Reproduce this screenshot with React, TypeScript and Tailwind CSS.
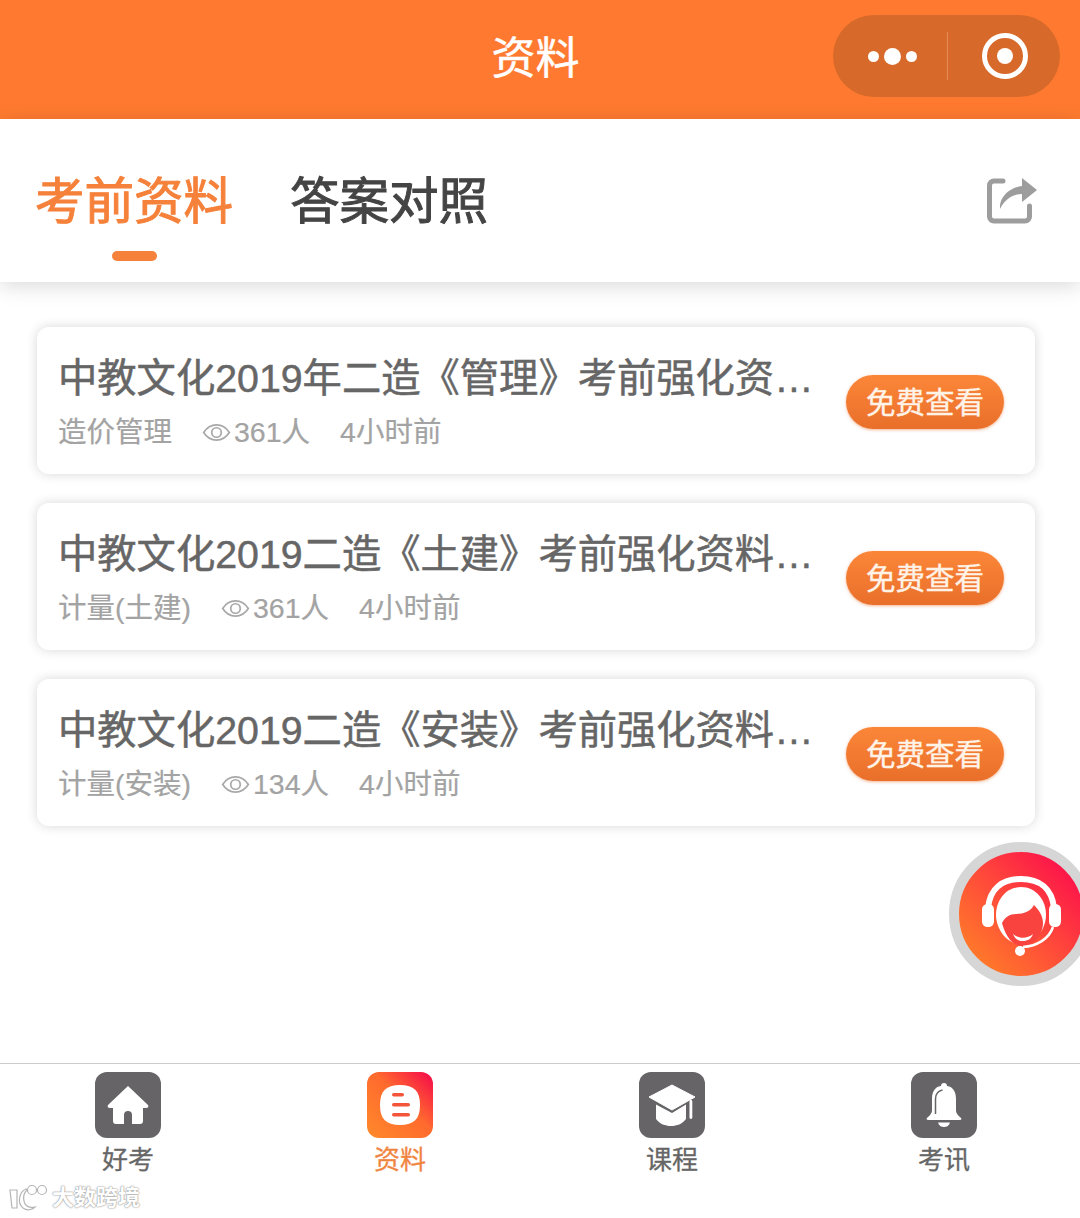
const font = '"Liberation Sans", "Noto Sans CJK SC", sans-serif';

const items = [
  { title: '中教文化2019年二造《管理》考前强化资料汇总', tag: '造价管理', views: '361人' },
  { title: '中教文化2019二造《土建》考前强化资料汇总', tag: '计量(土建)', views: '361人' },
  { title: '中教文化2019二造《安装》考前强化资料汇总', tag: '计量(安装)', views: '134人' },
];

function ShareIcon() {
  return (
    <svg viewBox="0 0 50 46" className="w-[50px] h-[46px]">
      <path d="M16 3H7a4.500 4.500 0 0 0-4.500 4.500v31A4.500 4.500 0 0 0 7 43h31a4.500 4.500 0 0 0 4.500-4.500V28" fill="none" stroke="#9d9d9d" strokeWidth="5" strokeLinecap="round" />
      <path d="M13 31C12 20 21 10 35 8V0l15 12-15 12v-8C26 16 18 21 13 31z" fill="#9d9d9d" />
    </svg>
  );
}

function EyeIcon() {
  return (
    <svg viewBox="0 0 30 20" className="w-[29px] h-[19px]" fill="none" stroke="#a8a8a8" strokeWidth="1.800">
      <path d="M1.500 10C5 4.500 9.500 2 15 2s10 2.500 13.500 8C25 15.500 20.500 18 15 18S5 15.500 1.500 10z" />
      <circle cx="15" cy="10" r="5" />
    </svg>
  );
}

function HomeIcon() {
  return (
    <svg viewBox="0 0 42 38" className="w-[42px] h-[38px]">
      <path d="M21 0 41 19c1 2 0 3-2 3h-3v13a3 3 0 0 1-3 3h-8V29a4 4 0 0 0-8 0v9H9a3 3 0 0 1-3-3V22H3c-2 0-3-1-2-3z" fill="#fff" />
    </svg>
  );
}

function DocIcon() {
  return (
    <svg viewBox="0 0 40 40" className="w-[40px] h-[40px]">
      <path d="M20 0c14 0 20 6 20 20s-6 20-20 20S0 34 0 20 6 0 20 0z" fill="#fff" />
      <rect x="12" y="8" width="12" height="3.500" rx="1.750" fill="#f4553a" />
      <rect x="12" y="18" width="18" height="3.500" rx="1.750" fill="#f4553a" />
      <rect x="12" y="28" width="18" height="3.500" rx="1.750" fill="#f4553a" />
    </svg>
  );
}

function CapIcon() {
  return (
    <svg viewBox="0 0 48 42" className="w-[48px] h-[42px]">
      <path d="M24 1 47 13 24 26 1 13z" fill="#fff" stroke="#fff" strokeLinejoin="round" strokeWidth="1" />
      <path d="M8 20.500 24 29 38 20.500V35c-4 5-9 7-15 7s-11-2-15-7z" fill="#fff" />
      <rect x="41.500" y="16" width="2.800" height="19" rx="1.400" fill="#fff" />
    </svg>
  );
}

function BellIcon() {
  return (
    <svg viewBox="0 0 36 44" className="w-[36px] h-[44px]">
      <path d="M18 0a3 3 0 0 1 3 3c7 1 9 7 9 13v11c0 4 3 6 5 8 1 1 0 2-1 2H2c-1 0-2-1-1-2 2-2 5-4 5-8V16c0-6 2-12 9-13a3 3 0 0 1 3-3z" fill="#fff" />
      <path d="M9.500 31V16c0-5 2-8 7-9" fill="none" stroke="#666" strokeWidth="1.500" />
      <path d="M12 39.500h12c-1 3-3 4.500-6 4.500s-5-1.500-6-4.500z" fill="#fff" />
    </svg>
  );
}

function AgentIcon() {
  return (
    <svg viewBox="0 0 84 84" className="w-[84px] h-[84px]">
      <path d="M9 36C11 16 24 7 42 7s31 9 33 29" fill="none" stroke="#fff" strokeWidth="6" />
      <rect x="3" y="32" width="12" height="23" rx="5.500" fill="#fff" />
      <rect x="70" y="32" width="12" height="23" rx="5.500" fill="#fff" />
      <path d="M42 15c15 0 25 13 25 28 0 12-9 29-25 29S17 55 17 43c0-15 10-28 25-28z" fill="#fff" />
      <path d="M23 51c3-6 8-9 14-9 8 0 15-3 18-9 5 5 9 11 9 18 0 10-8 23-20 23S26 62 23 51z" fill="#f9433f" />
      <path d="M34 62c6 5 14 5 20 0-2 5-5 7-10 7s-8-2-10-7z" fill="#fff" />
      <path d="M74 55C70 67 58 74 44 75" fill="none" stroke="#fff" strokeWidth="2.500" />
      <circle cx="41" cy="79" r="5" fill="#fff" />
    </svg>
  );
}

function WatermarkLogo() {
  return (
    <svg viewBox="0 0 42 30" className="w-[42px] h-[30px]" fill="#fff" stroke="#b5b5b5" strokeWidth="1.200">
      <path d="M1 7h7v18H3z" />
      <path d="M17 6C10 9 8 20 14 25c4 3 9 2 12-1-5 1-10 0-11-6-1-4 0-8 3-11z" />
      <circle cx="23" cy="7" r="4.500" fill="none" />
      <circle cx="33" cy="7" r="4.500" fill="none" />
    </svg>
  );
}

const tabs = [
  { label: '好考', bg: 'bg-[#666467]', text: 'text-[#666666]', icon: <HomeIcon /> },
  { label: '资料', bg: 'bg-[linear-gradient(45deg,#ff8a2a,#ff6a2e_55%,#f5064a)]', text: 'text-[#f0853f]', icon: <DocIcon /> },
  { label: '课程', bg: 'bg-[#666467]', text: 'text-[#666666]', icon: <CapIcon /> },
  { label: '考讯', bg: 'bg-[#666467]', text: 'text-[#666666]', icon: <BellIcon /> },
];

export default function App() {
  return (
    <div className="relative flex flex-col w-[1080px] h-[1218px] overflow-hidden bg-white" style={{ fontFamily: font }}>
      {/* Header */}
      <header className="relative flex items-center justify-center h-[119px] shrink-0 bg-[#ff7a30]">
        <h1 className="ml-[-9px] mt-[-2px] text-[44px] leading-none font-normal text-white [-webkit-text-stroke:0.5px_#fff]">资料</h1>
        <div className="absolute left-[833px] top-[15px] flex items-center w-[227px] h-[82px] rounded-full bg-[#d76a2a]">
          <div className="flex items-center justify-center gap-[5px] w-[114px] pl-[4px]">
            <span className="w-[11px] h-[11px] rounded-full bg-white" />
            <span className="w-[17px] h-[17px] rounded-full bg-white" />
            <span className="w-[11px] h-[11px] rounded-full bg-white" />
          </div>
          <div className="w-px h-[48px] bg-[#e58c56]" />
          <div className="flex items-center justify-center flex-1 pl-[2px]">
            <div className="flex items-center justify-center w-[46px] h-[46px] rounded-full border-[5px] border-white">
              <span className="w-[16px] h-[16px] rounded-full bg-white" />
            </div>
          </div>
        </div>
      </header>

      {/* Tabs */}
      <div className="relative z-10 flex items-start h-[163px] shrink-0 pl-[36px] pr-[43px] pt-[53px] bg-white shadow-[0_4px_20px_rgba(0,0,0,0.15)]">
        <div className="flex flex-col items-center w-[196px]">
          <span className="text-[49.5px] leading-[60px] text-[#f5813a] whitespace-nowrap [-webkit-text-stroke:1px_#f5813a]">考前资料</span>
          <span className="mt-[19px] w-[45px] h-[10px] rounded-full bg-[#f5813a]" />
        </div>
        <span className="ml-[58px] text-[49.5px] leading-[60px] text-[#444444] whitespace-nowrap [-webkit-text-stroke:1px_#444444]">答案对照</span>
        <div className="ml-auto mt-[6px]">
          <ShareIcon />
        </div>
      </div>

      {/* List */}
      <main className="flex-1 flex flex-col gap-[29px] pl-[37px] pr-[45px] pt-[45px]">
        {items.map((item) => (
          <div key={item.title} className="flex items-center h-[147px] pl-[22px] pr-[31px] rounded-[12px] bg-white shadow-[0_0_12px_rgba(0,0,0,0.16)]">
            <div className="flex-1 min-w-0 pt-[4px]">
              <p className="ml-[-1px] w-[760px] truncate text-[39.3px] leading-[50px] text-[#666666] [-webkit-text-stroke:0.5px_#666666]">{item.title}</p>
              <div className="flex items-center ml-[-1px] mt-[9px] text-[28.5px] leading-[40px] text-[#a3a3a3] whitespace-nowrap [-webkit-text-stroke:0.2px_#a3a3a3]">
                <span>{item.tag}</span>
                <span className="ml-[30px] mr-[3px]"><EyeIcon /></span>
                <span>{item.views}</span>
                <span className="ml-[30px]">4小时前</span>
              </div>
            </div>
            <button className="flex items-center justify-center shrink-0 mt-[3px] w-[158px] h-[54px] pt-[2px] rounded-full text-[29.5px] leading-none text-[#fff3e8] [-webkit-text-stroke:0.4px_#fff3e8] bg-[linear-gradient(180deg,#fb8638,#e96f2a)] shadow-[0_1px_3px_rgba(230,110,40,0.5)]">
              免费查看
            </button>
          </div>
        ))}
      </main>

      {/* Floating service button */}
      <div className="absolute left-[949px] top-[842px] flex items-center justify-center w-[144px] h-[144px] rounded-full border-[10px] border-[#d6d6d6] bg-[linear-gradient(45deg,#ff8a24,#ff4a3a_50%,#fb0150)]">
        <AgentIcon />
      </div>

      {/* Bottom nav */}
      <nav className="h-[155px] shrink-0 pt-[8px] border-t border-[#cccccc] bg-white">
        <div className="grid grid-cols-4 w-[1088px] ml-[-8px]">
          {tabs.map((tab) => (
            <div key={tab.label} className="flex flex-col items-center">
              <div className={`flex items-center justify-center w-[66px] h-[66px] rounded-[12px] ${tab.bg}`}>{tab.icon}</div>
              <span className={`mt-[4px] text-[26px] leading-[36px] [-webkit-text-stroke:0.3px] ${tab.text}`}>{tab.label}</span>
            </div>
          ))}
        </div>
      </nav>

      {/* Watermark */}
      <div className="absolute left-[9px] top-[1183px] flex items-center gap-[1px]">
        <WatermarkLogo />
        <span className="text-[22px] leading-[30px] font-bold text-white [text-shadow:0_0_2px_#8f8f8f,0_0_1px_#8f8f8f]">大数跨境</span>
      </div>
    </div>
  );
}
